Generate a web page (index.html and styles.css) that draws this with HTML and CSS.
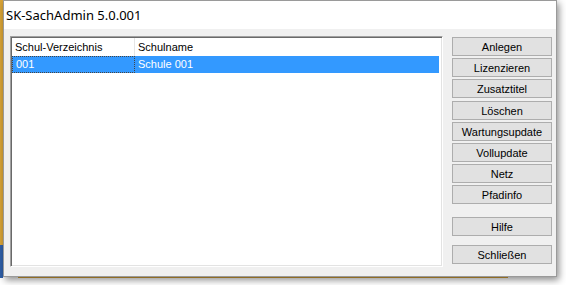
FILE: index.html
```html
<!DOCTYPE html>
<html>
<head>
<meta charset="utf-8">
<link rel="stylesheet" href="styles.css">
</head>
<body>
<div class="screen">
  <div class="window">
    <div class="titlebar">SK-SachAdmin 5.0.001</div>
    <div class="client">
      <div class="listbox">
        <div class="row header">
          <div class="cell c1">Schul-Verzeichnis</div>
          <div class="cell c2">Schulname</div>
        </div>
        <div class="row selected">
          <div class="cell c1 focus">001</div>
          <div class="cell c2">Schule 001</div>
        </div>
      </div>
      <div class="buttons">
        <button class="btn">Anlegen</button>
        <button class="btn">Lizenzieren</button>
        <button class="btn">Zusatztitel</button>
        <button class="btn">Löschen</button>
        <button class="btn">Wartungsupdate</button>
        <button class="btn">Vollupdate</button>
        <button class="btn">Netz</button>
        <button class="btn">Pfadinfo</button>
        <button class="btn sep-help">Hilfe</button>
        <button class="btn sep-close">Schließen</button>
      </div>
    </div>
  </div>
</div>
</body>
</html>
```

FILE: styles.css
```css
* { box-sizing: border-box; }
html, body { margin: 0; padding: 0; }
body {
  width: 566px;
  height: 285px;
  overflow: hidden;
  background: #ffffff;
}
.screen {
  width: 566px;
  height: 285px;
  padding-left: 3px;
  background:
    linear-gradient(#d9a437, #d9a437) 0 0 / 3px 245px no-repeat,
    linear-gradient(#2f5fa8, #2f5fa8) 0 245px / 3px 33px no-repeat,
    linear-gradient(#d9a437, #d9a437) 18px 276px / 490px 2px no-repeat,
    #ffffff;
}
.window {
  width: 554px;
  height: 277px;
  border: 1px solid #9a9a9a;
  background: #f0f0f0;
  display: flex;
  flex-direction: column;
  box-shadow: 2px 3px 7px rgba(0,0,0,0.45);
}
.titlebar {
  height: 28px;
  flex: none;
  background: #ffffff;
  font-family: "Segoe UI", "Noto Sans", "DejaVu Sans", sans-serif;
  font-size: 13px;
  color: #000;
  padding: 4px 0 0 2px;
  line-height: 20px;
}
.client {
  flex: 1;
  display: flex;
  padding: 7px 3px 0 6px;
  gap: 9px;
  font-family: "Liberation Sans", Arial, sans-serif;
  font-size: 11px;
}
.listbox {
  width: 433px;
  height: 231px;
  background: #ffffff;
  border-top: 1px solid #a0a0a0;
  border-left: 1px solid #a0a0a0;
  border-right: 1px solid #ffffff;
  border-bottom: 1px solid #ffffff;
  box-shadow: inset 1px 1px 0 #696969, inset -1px -1px 0 #e3e3e3;
  padding: 1px 3px 0 1px;
}
.row {
  display: flex;
  height: 17px;
  line-height: 17px;
}
.header { height: 18px; line-height: 19px; }
.cell { padding-left: 3px; white-space: nowrap; }
.c1 { width: 123px; }
.c2 { flex: 1; }
.header .c1 { border-right: 1px solid #e5e5e5; }
.header .c2 { padding-left: 3px; }
.selected { background: #3399ff; color: #ffffff; }
.selected .c1 { border: 1px dotted #444; line-height: 15px; }
.selected .c2 { padding-left: 3px; }
.buttons {
  width: 100px;
  display: flex;
  flex-direction: column;
  gap: 2.2px;
  padding-top: 1px;
}
.btn {
  height: 19px;
  width: 100px;
  flex: none;
  margin: 0;
  padding: 1px 0 0 0;
  background: #e1e1e1;
  border: 1px solid #adadad;
  font-family: "Liberation Sans", Arial, sans-serif;
  font-size: 11px;
  color: #000;
  text-align: center;
}
.sep-help { margin-top: 10px; }
.sep-close { margin-top: 7px; }
```
